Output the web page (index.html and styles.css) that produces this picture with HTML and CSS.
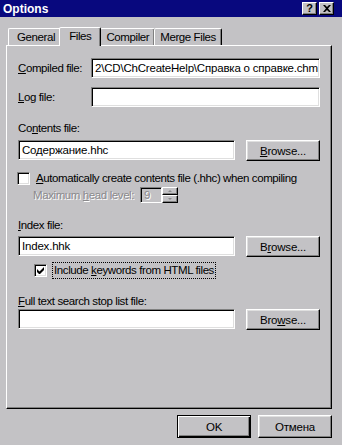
FILE: index.html
```html
<!DOCTYPE html>
<html lang="en">
<head>
    <meta charset="UTF-8">
    <title>Options</title>
    <link rel="stylesheet" href="styles.css">
</head>
<body>
    <div class="window">
        <div class="titlebar">
            <span class="title">Options</span>
            <div class="caption-buttons">
                <span class="cap-btn">?</span>
                <span class="cap-btn cap-close">
                    <svg width="8" height="7" viewBox="0 0 8 7"><path d="M0 0h2l2 2 2-2h2L5 3.5 8 7H6L4 5 2 7H0l3-3.5z" fill="#000"/></svg>
                </span>
            </div>
        </div>

        <div class="tabs">
            <div class="tab">General</div>
            <div class="tab active">Files</div>
            <div class="tab">Compiler</div>
            <div class="tab">Merge Files</div>
        </div>

        <div class="panel">
            <div class="row r-compiled">
                <label class="lbl-side"><u>C</u>ompiled file:</label>
                <div class="field wide">2\CD\ChCreateHelp\Справка о справке.chm</div>
            </div>
            <div class="row r-log">
                <label class="lbl-side"><u>L</u>og file:</label>
                <div class="field wide"></div>
            </div>

            <div class="lbl r-contents-lbl">Co<u>n</u>tents file:</div>
            <div class="row browse-row">
                <div class="field">Содержание.hhc</div>
                <button class="button"><u>B</u>rowse...</button>
            </div>

            <div class="check-row r-auto">
                <span class="checkbox"></span>
                <span><u>A</u>utomatically create contents file (.hhc) when compiling</span>
            </div>
            <div class="spin-row">
                <span class="disabled">Maximum <u>h</u>ead level:</span>
                <div class="spin">
                    <div class="spin-field disabled">9</div>
                    <div class="spin-arrows">
                        <span class="arrow up"></span>
                        <span class="arrow down"></span>
                    </div>
                </div>
            </div>

            <div class="lbl r-index-lbl"><u>I</u>ndex file:</div>
            <div class="row browse-row">
                <div class="field">Index.hhk</div>
                <button class="button">B<u>r</u>owse...</button>
            </div>
            <div class="check-row r-include">
                <span class="checkbox">
                    <svg width="7" height="7" viewBox="0 0 7 7"><path d="M0 2v3l2 2h1l4-4V0L2.5 4.5z" fill="#000"/></svg>
                </span>
                <span class="focus">Include <u>k</u>eywords from HTML files</span>
            </div>

            <div class="lbl r-full-lbl"><u>F</u>ull text search stop list file:</div>
            <div class="row browse-row">
                <div class="field"></div>
                <button class="button">Bro<u>w</u>se...</button>
            </div>
        </div>

        <div class="footer">
            <button class="button default">OK</button>
            <button class="button">Отмена</button>
        </div>
    </div>
</body>
</html>
```

FILE: styles.css
```css
body{margin:0;background:#c3c2c5;font-family:"Liberation Sans",Arial,sans-serif;font-size:11.5px;color:#000;letter-spacing:-0.4px}
.window{width:342px;height:445px;overflow:hidden;background:#c3c2c5}
u{text-decoration:underline;text-underline-offset:1px}
.titlebar{height:17px;background:#08087e;display:flex;align-items:center;justify-content:space-between;padding:0 8px 0 3px}
.title{color:#fff;font-weight:bold;font-size:12px;letter-spacing:0}
.caption-buttons{display:flex;gap:2px}
.cap-btn{width:13px;height:11px;background:#c3c2c5;border:1px solid;border-color:#fff #000 #000 #fff;box-shadow:inset -1px -1px #808080;display:flex;align-items:center;justify-content:center;font-weight:bold;font-size:11px;line-height:11px;letter-spacing:0}
.tabs{display:flex;align-items:flex-end;height:20px;margin:8px 0 0 8px}
.tab{height:16px;padding:0 5px;border:1px solid;border-bottom:none;border-color:#fff #000 transparent #fff;box-shadow:inset -1px 0 #808080;border-radius:2px 2px 0 0;display:flex;align-items:center;margin-right:-1px;position:relative}
.tab:first-child{padding:0 6px 0 8px}
.tab.active{height:19px;margin:0 -1px 0 -2px;padding:0 9px;z-index:1;background:#c3c2c5;top:1px;align-items:flex-start;padding-top:2px;box-sizing:border-box}
.panel{margin-left:6px;border:1px solid;border-color:#fff #000 #000 #fff;box-shadow:inset -1px -1px #808080;padding:12px 11px 0 11px;box-sizing:border-box;width:326px;height:364px}
.row{display:flex;align-items:flex-start;justify-content:space-between}
.lbl-side{line-height:20px}
.r-log{margin-top:9px}
.field{box-sizing:border-box;height:20px;width:217px;background:#fff;border:1px solid;border-color:#808080 #fff #fff #808080;box-shadow:inset 1px 1px #000,inset -1px -1px #dfdfdf;padding:0 3px;line-height:18px;white-space:nowrap;overflow:hidden;font-size:11.5px;letter-spacing:-0.2px}
.field.wide{width:229px}
.lbl{line-height:13px}
.r-contents-lbl{margin-top:15px;margin-bottom:5px}
.button{box-sizing:border-box;width:74px;height:21px;background:#c3c2c5;border:1px solid;border-color:#fff #000 #000 #fff;box-shadow:inset -1px -1px #808080,inset 1px 1px #dfdfdf;font:inherit;font-size:11.5px;letter-spacing:-0.2px;color:#000;padding:0;cursor:pointer}
.check-row{display:flex;align-items:center;height:14px}
.checkbox{box-sizing:border-box;width:13px;height:13px;background:#fff;border:1px solid;border-color:#808080 #fff #fff #808080;box-shadow:inset 1px 1px #000,inset -1px -1px #dfdfdf;display:flex;align-items:center;justify-content:center;margin-right:6px}
.r-auto{margin-top:10px;margin-left:-1px}
.spin-row{display:flex;align-items:center;height:16px;margin:2px 0 0 15px}
.disabled{color:#8a898c;text-shadow:1px 1px #fff}
.spin{display:flex;margin-left:6px;height:16px}
.spin-field{box-sizing:border-box;width:22px;height:16px;border:1px solid;border-color:#808080 #fff #fff #808080;box-shadow:inset 1px 1px #000;padding-left:3px;line-height:14px}
.spin-arrows{display:flex;flex-direction:column;width:16px}
.arrow{box-sizing:border-box;height:8px;border:1px solid;border-color:#fff #000 #000 #fff;box-shadow:inset -1px -1px #808080;display:flex;align-items:center;justify-content:center}
.arrow::after{content:"";border-left:2px solid transparent;border-right:2px solid transparent}
.arrow.up::after{border-bottom:2px solid #8a898c}
.arrow.down::after{border-top:2px solid #8a898c}
.r-index-lbl{margin-top:16px;margin-bottom:4px}
.r-include{margin:5px 0 0 16px;height:16px}
.focus{outline:1px dotted #000;padding:0 1px;line-height:15px}
.r-full-lbl{margin-top:17px;margin-bottom:1px}
.footer{display:flex;justify-content:flex-end;gap:7px;padding:6px 10px 0 0}
.footer .button{height:23px}
.button.default{border:1px solid #000;box-shadow:inset 1px 1px #fff,inset -1px -1px #000,inset -2px -2px #808080}
```
